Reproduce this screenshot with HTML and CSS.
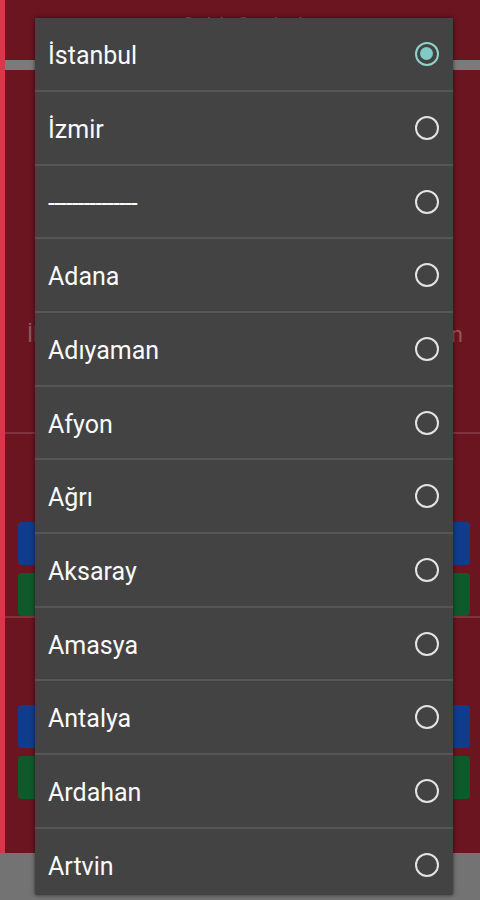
FILE: index.html
```html
<!DOCTYPE html>
<html lang="tr">
<head>
    <meta charset="UTF-8">
    <meta name="viewport" content="width=device-width, initial-scale=1.0">
    <title>Şehir Seçimi</title>
    <link rel="stylesheet" href="styles.css">
</head>
<body>

    <div class="page">
        <div class="header">Şehir Seçimi</div>
        <div class="bar"></div>
        <div class="label-row">
            <span>İl</span>
            <span>Seçin</span>
        </div>
        <div class="divider"></div>
        <div class="buttons">
            <div class="btn blue"></div>
            <div class="btn green"></div>
        </div>
        <div class="divider"></div>
        <div class="buttons second">
            <div class="btn blue"></div>
            <div class="btn green"></div>
        </div>
    </div>
    <div class="footer"></div>

    <!-- liste penceresi -->
    <div class="dialog">
        <ul class="list">
            <li class="item"><span>İstanbul</span><i class="radio checked"></i></li>
            <li class="item"><span>İzmir</span><i class="radio"></i></li>
            <li class="item"><span class="dashes">---------------</span><i class="radio"></i></li>
            <li class="item"><span>Adana</span><i class="radio"></i></li>
            <li class="item"><span>Adıyaman</span><i class="radio"></i></li>
            <li class="item"><span>Afyon</span><i class="radio"></i></li>
            <li class="item"><span>Ağrı</span><i class="radio"></i></li>
            <li class="item"><span>Aksaray</span><i class="radio"></i></li>
            <li class="item"><span>Amasya</span><i class="radio"></i></li>
            <li class="item"><span>Antalya</span><i class="radio"></i></li>
            <li class="item"><span>Ardahan</span><i class="radio"></i></li>
            <li class="item"><span>Artvin</span><i class="radio"></i></li>
        </ul>
    </div>

</body>
</html>
```

FILE: styles.css
```css
body {
    margin: 0;
    width: 480px;
    height: 900px;
    overflow: hidden;
    background-color: #6b1521;
    font-family: Roboto, "Noto Sans", Arial, sans-serif;
    position: relative;
}
.page {
    height: 853px;
    border-left: 5px solid #d9364c;
    background-color: #6b1521;
    box-sizing: border-box;
}
.header {
    height: 60px;
    padding-top: 13px;
    box-sizing: border-box;
    text-align: center;
    color: #8e5a62;
    font-size: 22px;
}
.bar {
    height: 10px;
    background-color: #7a7c7c;
}
.label-row {
    display: flex;
    justify-content: space-between;
    padding: 252px 17px 0 22px;
    height: 362px;
    box-sizing: border-box;
    color: #8e5860;
    font-size: 22px;
}
.divider {
    height: 2px;
    background-color: #7e3440;
}
.buttons {
    display: flex;
    flex-direction: column;
    gap: 8px;
    padding: 88px 10px 0 13px;
}
.buttons.second {
    padding-top: 87px;
}
.btn {
    height: 43px;
    border-radius: 4px;
}
.btn.blue {
    background-color: #0f3d8c;
}
.btn.green {
    background-color: #0f5a2b;
}
.footer {
    height: 47px;
    background-color: #737373;
}

.dialog {
    position: absolute;
    left: 35px;
    top: 18px;
    width: 418px;
    height: 877px;
    background-color: #434343;
    overflow: hidden;
    box-shadow: 0 0 4px rgba(0, 0, 0, 0.6);
}
.list {
    list-style: none;
    margin: 0.3px 0 0 0;
    padding: 0;
}
.item {
    height: 73.7px;
    box-sizing: border-box;
    border-bottom: 2px solid #565656;
    display: flex;
    align-items: center;
    justify-content: space-between;
    padding: 3px 14px 0 13px;
    color: #fafafa;
    font-size: 25px;
}
.dashes {
    letter-spacing: -1px;
}
.radio {
    width: 24px;
    height: 24px;
    border: 2.5px solid #e4e4e4;
    border-radius: 50%;
    box-sizing: border-box;
    position: relative;
    margin-top: -3px;
}
.radio.checked {
    border-color: #8fd3cb;
}
.radio.checked::after {
    content: "";
    position: absolute;
    left: 3px;
    top: 3px;
    width: 13px;
    height: 13px;
    border-radius: 50%;
    background-color: #80cbc4;
}
```
